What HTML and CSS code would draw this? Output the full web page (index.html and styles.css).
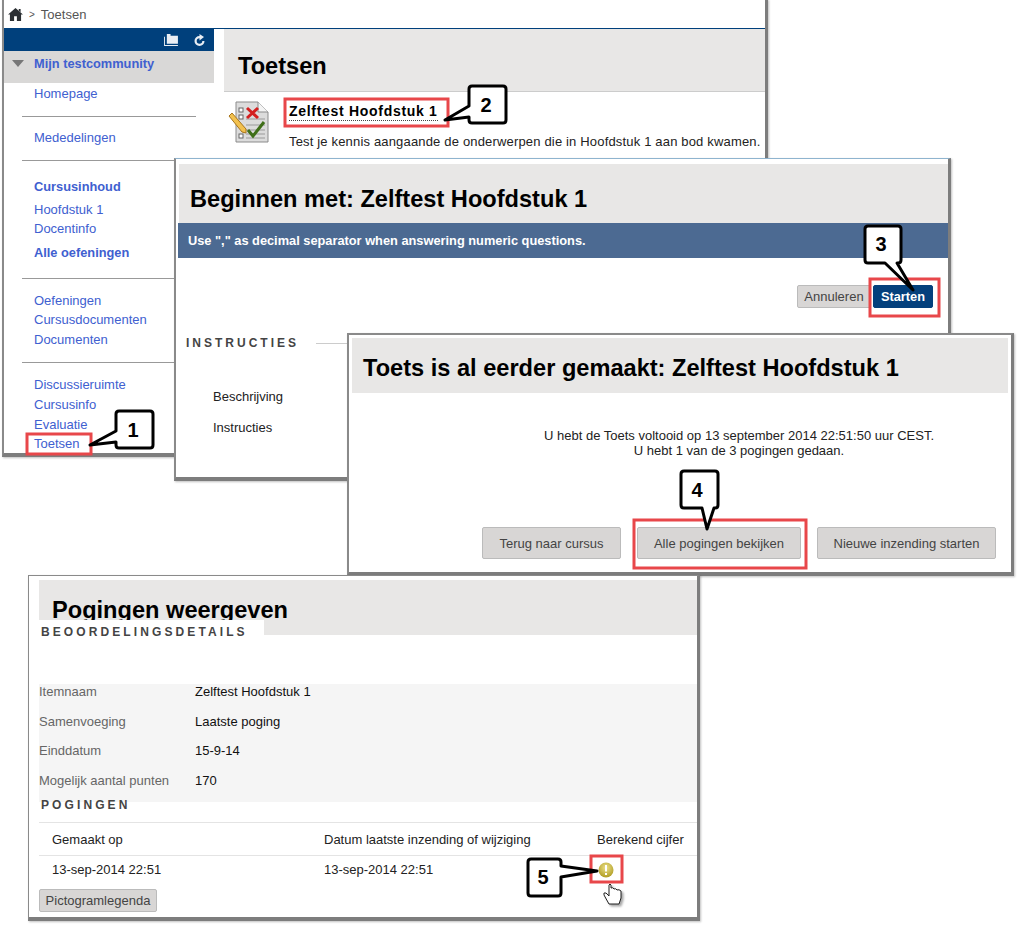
FILE: index.html
```html
<!DOCTYPE html>
<html lang="nl">
<head>
  <meta charset="UTF-8" />
  <title>Toetsen</title>
  <link rel="stylesheet" href="styles.css">
</head>
<body>
  <div class="canvas">

    <!-- venster 1: cursus -->
    <div class="window win-course">
      <div class="crumbs">
        <svg class="home-icon" viewBox="0 0 16 14"><path d="M8 0 L16 7 L14 7 L14 14 L9.5 14 L9.5 9 L6.5 9 L6.5 14 L2 14 L2 7 L0 7 Z M11.5 1 L13.5 1 L13.5 4.5 L11.5 2.8 Z" fill="#2b2f33"/></svg>
        <span class="crumb-sep">&gt;</span>
        <span>Toetsen</span>
      </div>
      <div class="course-body">
        <div class="sidebar">
          <div class="side-top">
            <svg class="side-icon" viewBox="0 0 15 13"><path d="M0 3 H1 V12 H15 V13 H0 Z M3 0 H7 V2 H15 V10.5 H3 Z" fill="#e9eef4"/></svg>
            <svg class="side-icon refresh" viewBox="0 0 13 13"><path d="M6.5 2 A5 5 0 1 0 11.5 7 H9.3 A2.8 2.8 0 1 1 6.5 4.2 V6.5 L11 3.1 L6.5 0 Z" fill="#e9eef4"/></svg>
          </div>
          <div class="side-title"><span class="tri"></span><span>Mijn testcommunity</span></div>
          <ul class="side-group first">
            <li><a href="#">Homepage</a></li>
          </ul>
          <ul class="side-group single">
            <li><a href="#">Mededelingen</a></li>
          </ul>
          <ul class="side-group mixed">
            <li class="strong"><a href="#">Cursusinhoud</a></li>
            <li><a href="#">Hoofdstuk 1</a></li>
            <li><a href="#">Docentinfo</a></li>
            <li class="strong"><a href="#">Alle oefeningen</a></li>
          </ul>
          <ul class="side-group">
            <li><a href="#">Oefeningen</a></li>
            <li><a href="#">Cursusdocumenten</a></li>
            <li><a href="#">Documenten</a></li>
          </ul>
          <ul class="side-group last">
            <li><a href="#">Discussieruimte</a></li>
            <li><a href="#">Cursusinfo</a></li>
            <li><a href="#">Evaluatie</a></li>
            <li><a href="#">Toetsen</a></li>
          </ul>
        </div>
        <div class="course-main">
          <h1 class="page-title title-course">Toetsen</h1>
          <div class="test-item">
            <svg class="test-icon" viewBox="0 0 42 42">
              <path d="M8 1 H30 L40 11 V41 H8 Z" fill="#dcdcdc" stroke="#8b8b8b"/>
              <path d="M30 1 V11 H40" fill="#f4f4f4" stroke="#8b8b8b"/>
              <rect x="11" y="7" width="4" height="4" fill="#fff" stroke="#666"/>
              <rect x="11" y="14" width="4" height="4" fill="#fff" stroke="#666"/>
              <rect x="11" y="33" width="4" height="4" fill="#fff" stroke="#666"/>
              <path d="M18 18 H37 M18 24 H37 M18 29 H37 M18 33 H37 M18 37 H37" stroke="#9a9a9a"/>
              <path d="M19 7 L30 17 M30 7 L19 17" stroke="#d32020" stroke-width="3"/>
              <path d="M20 29 L25 35 L36 21" fill="none" stroke="#3f6f18" stroke-width="3"/>
              <path d="M1 15 L4 12 L18 28 L18 32 L14 31 Z" fill="#f2c14e" stroke="#a8751c"/>
            </svg>
            <div class="test-text">
              <a class="test-link" href="#">Zelftest Hoofdstuk 1</a>
              <p>Test je kennis aangaande de onderwerpen die in Hoofdstuk 1 aan bod kwamen.</p>
            </div>
          </div>
        </div>
      </div>
    </div>

    <!-- venster 2: beginnen -->
    <div class="window win-start">
      <h1 class="page-title title-start">Beginnen met: Zelftest Hoofdstuk 1</h1>
      <div class="notice">Use "," as decimal separator when answering numeric questions.</div>
      <div class="start-actions">
        <button class="btn btn-small">Annuleren</button>
        <button class="btn btn-small btn-primary">Starten</button>
      </div>
      <div class="section-line">
        <span class="section-label wide">INSTRUCTIES</span>
        <span class="rule"></span>
      </div>
      <div class="start-row first-row">Beschrijving</div>
      <div class="start-row">Instructies</div>
    </div>

    <!-- venster 3: al eerder gemaakt -->
    <div class="window win-again">
      <h1 class="page-title title-again">Toets is al eerder gemaakt: Zelftest Hoofdstuk 1</h1>
      <div class="again-msg">
        <p>U hebt de Toets voltooid op 13 september 2014 22:51:50 uur CEST.</p>
        <p>U hebt 1 van de 3 pogingen gedaan.</p>
      </div>
      <div class="again-actions">
        <button class="btn">Terug naar cursus</button>
        <button class="btn">Alle pogingen bekijken</button>
        <button class="btn">Nieuwe inzending starten</button>
      </div>
    </div>

    <!-- venster 4: pogingen -->
    <div class="window win-attempts">
      <h1 class="page-title title-attempts">Pogingen weergeven</h1>
      <div class="details-label"><span class="section-label">BEOORDELINGSDETAILS</span></div>
      <dl class="details">
        <div class="detail-row"><dt>Itemnaam</dt><dd>Zelftest Hoofdstuk 1</dd></div>
        <div class="detail-row"><dt>Samenvoeging</dt><dd>Laatste poging</dd></div>
        <div class="detail-row"><dt>Einddatum</dt><dd>15-9-14</dd></div>
        <div class="detail-row"><dt>Mogelijk aantal punten</dt><dd>170</dd></div>
      </dl>
      <div class="attempts-label"><span class="section-label">POGINGEN</span></div>
      <div class="attempts-head">
        <span class="col-a">Gemaakt op</span>
        <span class="col-b">Datum laatste inzending of wijziging</span>
        <span>Berekend cijfer</span>
      </div>
      <div class="attempts-row">
        <span class="col-a">13-sep-2014 22:51</span>
        <span class="col-b">13-sep-2014 22:51</span>
        <svg class="warn-icon" viewBox="0 0 16 16">
          <defs>
            <radialGradient id="warnFill" cx="50%" cy="35%" r="65%">
              <stop offset="0" stop-color="#ece28c"/>
              <stop offset="1" stop-color="#b09c22"/>
            </radialGradient>
          </defs>
          <circle cx="8" cy="8" r="7.5" fill="url(#warnFill)"/>
          <rect x="7" y="3" width="2" height="6.5" fill="#fff"/>
          <rect x="7" y="11" width="2" height="2" fill="#fff"/>
        </svg>
      </div>
      <button class="btn btn-legend">Pictogramlegenda</button>
    </div>

    <!-- nummers en rode kaders -->
    <svg class="marks" viewBox="0 0 1017 926">
      <g class="red-box">
        <rect x="27" y="434" width="64" height="20"/>
        <rect x="285" y="99" width="163" height="27"/>
        <rect x="870" y="279" width="69" height="37"/>
        <rect x="634" y="520" width="172" height="48"/>
        <rect x="591" y="856" width="31" height="26"/>
      </g>
      <g class="callout">
        <path d="M119 411 H150 Q153 411 153 414 V445 Q153 448 150 448 H119 Q116 448 116 445 V442 L90 445 L116 431 V414 Q116 411 119 411 Z"/>
        <path d="M472 86 H503 Q506 86 506 89 V120 Q506 123 503 123 H472 Q469 123 469 120 V117 L445 120 L469 106 V89 Q469 86 472 86 Z"/>
        <path d="M868 226 H898 Q901 226 901 229 V260 Q901 263 898 263 H897 L913 290 L885 263 H868 Q865 263 865 260 V229 Q865 226 868 226 Z"/>
        <path d="M684 471 H715 Q718 471 718 474 V505 Q718 508 715 508 H714 L707 529 L702 508 H684 Q681 508 681 505 V474 Q681 471 684 471 Z"/>
        <path d="M531 859 H558 Q561 859 561 862 V866 L597 871 L561 877 V893 Q561 896 558 896 H531 Q528 896 528 893 V862 Q528 859 531 859 Z"/>
      </g>
      <g class="callout-num">
        <text x="133" y="437">1</text>
        <text x="486" y="112">2</text>
        <text x="881" y="251">3</text>
        <text x="697" y="497">4</text>
        <text x="543" y="884">5</text>
      </g>
      <path class="hand" d="M609 885 V896 L606 893 Q603 892 604 895 L609 904 H619 L621 898 V891 Q619 889 617 890 Q616 888 614 889 Q613 887 611 888 V885 Q610 883 609 885 Z"/>
    </svg>
  </div>
</body>
</html>
```

FILE: styles.css
```css
* {
  box-sizing: border-box;
}
body {
  margin: 0;
  background-color: #fff;
  font-family: "Liberation Sans", Arial, sans-serif;
  font-size: 13px;
  color: #222;
}
.canvas {
  position: relative;
  width: 1017px;
  height: 926px;
  overflow: hidden;
}
.window {
  position: absolute;
  background-color: #fff;
  border: 1px solid #8a8a8a;
  border-right: 3px solid #7d7d7d;
  border-bottom: 4px solid #7d7d7d;
  box-shadow: 1px 1px 2px rgba(0, 0, 0, 0.25);
  overflow: hidden;
}
.win-course {
  left: 2px;
  top: -1px;
  width: 766px;
  height: 458px;
  border-left-width: 2px;
}
.win-start {
  left: 174px;
  top: 158px;
  width: 777px;
  height: 323px;
  border-top-color: #8fb4cf;
  border-left-width: 2px;
}
.win-again {
  left: 347px;
  top: 333px;
  width: 667px;
  height: 243px;
  border-left-width: 2px;
  border-top-width: 2px;
}
.win-attempts {
  left: 28px;
  top: 575px;
  width: 672px;
  height: 346px;
}
.page-title {
  margin: 0;
  background-color: #e8e7e6;
  font-size: 23.6px;
  font-weight: bold;
  color: #000;
}

/* venster 1 */
.crumbs {
  display: flex;
  align-items: center;
  height: 28px;
  padding: 1px 0 0 4px;
  color: #555;
}
.home-icon {
  width: 15px;
  height: 13px;
}
.crumb-sep {
  margin: 0 6px 0 6px;
  font-size: 10px;
}
.course-body {
  display: flex;
  border-top: 1px solid #00407c;
}
.sidebar {
  flex: none;
  width: 210px;
}
.side-top {
  display: flex;
  justify-content: flex-end;
  align-items: center;
  gap: 15px;
  height: 22px;
  padding-right: 8px;
  background-color: #00407c;
}
.side-icon {
  width: 14px;
  height: 12px;
}
.side-icon.refresh {
  width: 13px;
  height: 13px;
}
.side-title {
  display: flex;
  align-items: center;
  height: 32px;
  padding: 0 0 8px 8px;
  background-color: #d9d8d7;
  font-size: 12.8px;
  font-weight: bold;
  color: #4060d0;
}
.tri {
  width: 0;
  height: 0;
  margin-right: 10px;
  border-top: 7px solid #777;
  border-left: 6px solid transparent;
  border-right: 6px solid transparent;
}
.side-group {
  margin: 0 18px;
  padding: 12px 0 13px 12px;
  list-style: none;
  border-bottom: 1px solid #999;
  line-height: 19.6px;
}
.side-group.first {
  padding: 1px 0 12px 12px;
}
.side-group.single {
  padding: 11px 0 13px 12px;
}
.side-group.mixed {
  padding: 16px 0 15px 12px;
}
.side-group.last {
  padding-top: 12px;
  border-bottom: none;
}
.side-group li.strong {
  font-size: 12.8px;
  font-weight: bold;
}
.side-group li.strong:first-child {
  margin-bottom: 3px;
}
.side-group li.strong:last-child {
  margin-top: 4px;
}
.side-group a {
  color: #4060d0;
  text-decoration: none;
}
.course-main {
  flex: 1;
  padding-left: 10px;
}
.title-course {
  height: 63px;
  padding: 24px 0 0 14px;
  border-bottom: 1px solid #ccc;
}
.test-item {
  display: flex;
  padding: 9px 0 0 4px;
}
.test-icon {
  flex: none;
  width: 42px;
  height: 42px;
}
.test-text {
  padding: 2px 0 0 19px;
}
.test-link {
  display: inline-block;
  padding-bottom: 1px;
  border-bottom: 1px dotted #444;
  font-size: 14px;
  font-weight: bold;
  letter-spacing: 0.7px;
  color: #000;
  text-decoration: none;
}
.test-text p {
  margin: 13px 0 0;
  letter-spacing: 0.17px;
  white-space: nowrap;
}

/* venster 2 */
.title-start {
  height: 59px;
  margin: 5px 0 0 3px;
  padding: 22px 0 0 11px;
}
.notice {
  height: 35px;
  margin-left: 2px;
  padding: 10px 0 0 10px;
  background-color: #4c6a92;
  font-size: 12.8px;
  font-weight: bold;
  color: #fff;
}
.start-actions {
  display: flex;
  justify-content: flex-end;
  gap: 2px;
  padding: 27px 15px 0 0;
}
.btn {
  height: 32px;
  padding: 0;
  background-color: #d8d6d5;
  border: 1px solid #bbb;
  border-radius: 2px;
  font-family: inherit;
  font-size: 13px;
  color: #444;
  white-space: nowrap;
}
.btn-small {
  width: 74px;
  height: 23px;
}
.btn-primary {
  width: 60px;
  background-color: #04407c;
  border-color: #04407c;
  font-size: 12.8px;
  font-weight: bold;
  color: #fff;
}
.section-label {
  font-size: 12px;
  font-weight: bold;
  letter-spacing: 3.1px;
  color: #444;
  white-space: nowrap;
}
.section-label.wide {
  letter-spacing: 3px;
}
.section-line {
  display: flex;
  align-items: center;
  gap: 17px;
  margin-top: 28px;
  padding-left: 10px;
}
.rule {
  flex: 1;
  height: 1px;
  background-color: #ccc;
}
.start-row {
  margin-top: 17px;
  padding-left: 37px;
  line-height: 14px;
}
.first-row {
  margin-top: 40px;
}

/* venster 3 */
.title-again {
  height: 55px;
  margin: 3px 3px 0 3px;
  padding: 17px 0 0 11px;
}
.again-msg {
  padding: 35px 0 0 0;
  text-align: center;
  line-height: 15px;
}
.again-msg p {
  margin: 0 0 0 118px;
}
.again-actions {
  display: flex;
  justify-content: flex-end;
  gap: 16px;
  padding: 69px 15px 0 0;
}
.again-actions .btn:nth-child(1) {
  width: 139px;
}
.again-actions .btn:nth-child(2) {
  width: 164px;
}
.again-actions .btn:nth-child(3) {
  width: 179px;
}

/* venster 4 */
.title-attempts {
  height: 55px;
  margin: 4px 0 0 10px;
  padding: 17px 0 0 13px;
  overflow: hidden;
}
.details-label {
  position: relative;
  width: 225px;
  height: 64px;
  margin: -15px 0 0 10px;
  padding: 4px 0 0 2px;
  background-color: #fff;
}
.details {
  margin: 0 0 0 10px;
  padding-top: 1px;
  height: 118px;
  background-color: #f5f5f5;
}
.detail-row {
  display: flex;
  height: 29.5px;
  line-height: 14px;
}
.detail-row dt {
  width: 156px;
  color: #666;
}
.detail-row dd {
  margin: 0;
  color: #111;
}
.attempts-label {
  margin: -5px 0 0 12px;
  position: relative;
  height: 25px;
}
.attempts-head,
.attempts-row {
  display: flex;
  align-items: center;
  height: 33px;
  margin-left: 10px;
  padding-left: 13px;
  border-top: 1px solid #e4e4e4;
}
.attempts-row {
  height: 28px;
}
.col-a {
  width: 272px;
}
.col-b {
  width: 273px;
}
.warn-icon {
  width: 16px;
  height: 16px;
  margin-left: 1px;
}
.btn-legend {
  display: block;
  width: 118px;
  height: 23px;
  margin: 6px 0 0 10px;
}

/* annotaties */
.marks {
  position: absolute;
  left: 0;
  top: 0;
  width: 1017px;
  height: 926px;
}
.red-box rect {
  fill: none;
  stroke: #e8474a;
  stroke-width: 3;
}
.callout path {
  fill: #fff;
  stroke: #000;
  stroke-width: 3;
  stroke-linejoin: round;
}
.callout-num text {
  font-family: "Liberation Sans", Arial, sans-serif;
  font-size: 20px;
  font-weight: bold;
  text-anchor: middle;
  fill: #000;
}
.hand {
  fill: #fff;
  stroke: #222;
  stroke-width: 1;
  filter: drop-shadow(2px 2px 1px rgba(0, 0, 0, 0.35));
}
```
